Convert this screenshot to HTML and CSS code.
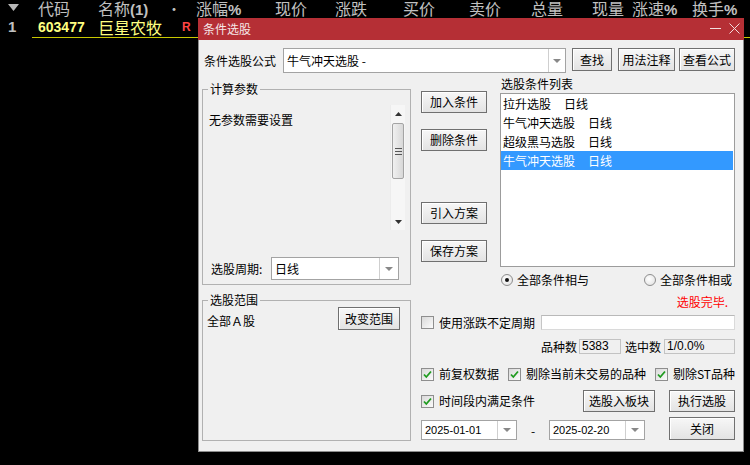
FILE: index.html
```html
<!DOCTYPE html>
<html lang="zh-CN">
<head>
  <meta charset="UTF-8" />
  <title>条件选股</title>
  <link rel="stylesheet" href="styles.css">
</head>
<body>
  <div class="quote-head">
    <span class="mark"><svg width="11" height="7" viewBox="0 0 11 7"><path d="M0 0 H11 L5.5 7 Z" fill="#b8b8b8"/></svg></span>
    <span class="c-code">代码</span>
    <span>名称<b>(1)</b></span>
    <span class="dot">•</span>
    <span>涨幅<b>%</b></span>
    <span>现价</span>
    <span>涨跌</span>
    <span>买价</span>
    <span>卖价</span>
    <span>总量</span>
    <span>现量</span>
    <span>涨速<b>%</b></span>
    <span>换手<b>%</b></span>
  </div>
  <div class="quote-row">
    <span class="idx">1</span>
    <span class="c-code code">603477</span>
    <span class="name">巨星农牧</span>
    <span class="flag">R</span>
    <span></span><span></span><span></span><span></span><span></span>
    <span></span><span></span><span></span><span></span>
  </div>

  <div class="dlg">
    <div class="dlg-title">
      <span>条件选股</span>
      <svg width="40" height="22" viewBox="0 0 40 22">
        <path d="M6 10.5 H17" stroke="#f2dede" stroke-width="1"/>
        <path d="M25.5 5.5 L35.5 15.5 M35.5 5.5 L25.5 15.5" stroke="#f2dede" stroke-width="1"/>
      </svg>
    </div>
    <div class="dlg-body">
      <div class="formula-row">
        <span class="formula-lbl">条件选股公式</span>
        <div class="combo combo-formula">
          <span class="combo-text">牛气冲天选股 -</span>
          <span class="combo-btn"><i class="tri"></i></span>
        </div>
        <button class="btn btn-find">查找</button>
        <button class="btn btn-usage">用法注释</button>
        <button class="btn btn-view">查看公式</button>
      </div>

      <div class="main">
        <div class="left-col">
          <fieldset class="group group-params">
            <legend>计算参数</legend>
            <div class="param-pane">
              <div class="param-text">无参数需要设置</div>
              <div class="vscroll">
                <span class="sb-arrow"><svg width="7" height="4" viewBox="0 0 7 4"><path d="M0 4 L3.5 0 L7 4 Z" fill="#333"/></svg></span>
                <span class="sb-thumb"><i></i><i></i><i></i></span>
                <span class="sb-track"></span>
                <span class="sb-arrow"><svg width="7" height="4" viewBox="0 0 7 4"><path d="M0 0 L3.5 4 L7 0 Z" fill="#333"/></svg></span>
              </div>
            </div>
            <div class="period-row">
              <span class="period-lbl">选股周期:</span>
              <div class="combo combo-period">
                <span class="combo-text">日线</span>
                <span class="combo-btn"><i class="tri"></i></span>
              </div>
            </div>
          </fieldset>

          <fieldset class="group group-range">
            <legend>选股范围</legend>
            <div class="range-row">
              <span class="range-text">全部Ａ股</span>
              <button class="btn btn-range">改变范围</button>
            </div>
          </fieldset>
        </div>

        <div class="right-col">
          <div class="top-area">
            <div class="mid-btns">
              <button class="btn">加入条件</button>
              <button class="btn">删除条件</button>
              <button class="btn gap-big">引入方案</button>
              <button class="btn">保存方案</button>
            </div>
            <div class="list-col">
              <div class="list-lbl">选股条件列表</div>
              <div class="cond-list">
                <div class="cond-item">拉升选股<span class="period">日线</span></div>
                <div class="cond-item">牛气冲天选股<span class="period">日线</span></div>
                <div class="cond-item">超级黑马选股<span class="period">日线</span></div>
                <div class="cond-item selected">牛气冲天选股<span class="period">日线</span></div>
              </div>
              <div class="radio-row">
                <label class="opt"><span class="radio on"></span>全部条件相与</label>
                <label class="opt"><span class="radio"></span>全部条件相或</label>
              </div>
            </div>
          </div>

          <div class="status">选股完毕.</div>

          <div class="row row-cycle">
            <label class="opt"><span class="chk"></span>使用涨跌不定周期</label>
            <span class="edit edit-cycle"></span>
          </div>

          <div class="row row-count">
            <span>品种数</span>
            <span class="field field-total">5383</span>
            <span class="count-lbl">选中数</span>
            <span class="field field-hit">1/0.0%</span>
          </div>

          <div class="row row-opts">
            <label class="opt"><span class="chk on"><svg width="11" height="11" viewBox="0 0 11 11"><path d="M2 5.5 L4.3 8 L9 2.5" fill="none" stroke="#1f9b1f" stroke-width="1.8"/></svg></span>前复权数据</label>
            <label class="opt"><span class="chk on"><svg width="11" height="11" viewBox="0 0 11 11"><path d="M2 5.5 L4.3 8 L9 2.5" fill="none" stroke="#1f9b1f" stroke-width="1.8"/></svg></span>剔除当前未交易的品种</label>
            <label class="opt"><span class="chk on"><svg width="11" height="11" viewBox="0 0 11 11"><path d="M2 5.5 L4.3 8 L9 2.5" fill="none" stroke="#1f9b1f" stroke-width="1.8"/></svg></span>剔除ST品种</label>
          </div>

          <div class="row row-run">
            <label class="opt"><span class="chk on"><svg width="11" height="11" viewBox="0 0 11 11"><path d="M2 5.5 L4.3 8 L9 2.5" fill="none" stroke="#1f9b1f" stroke-width="1.8"/></svg></span>时间段内满足条件</label>
            <button class="btn btn-block">选股入板块</button>
            <button class="btn btn-run">执行选股</button>
          </div>

          <div class="row row-dates">
            <div class="combo combo-date">
              <span class="combo-text date">2025-01-01</span>
              <span class="combo-btn"><i class="tri"></i></span>
            </div>
            <span class="dash">-</span>
            <div class="combo combo-date">
              <span class="combo-text date">2025-02-20</span>
              <span class="combo-btn"><i class="tri"></i></span>
            </div>
            <button class="btn btn-close">关闭</button>
          </div>
        </div>
      </div>
    </div>
  </div>
</body>
</html>
```

FILE: styles.css
```css
* {
  box-sizing: border-box;
}
body {
  margin: 0;
  width: 750px;
  height: 465px;
  overflow: hidden;
  position: relative;
  background: #000;
  font-family: "Noto Sans CJK SC", sans-serif;
  font-size: 12px;
  color: #000;
}

/* quote table behind the dialog */
.quote-head,
.quote-row {
  display: grid;
  grid-template-columns: 32px 66px 68px 30px 79px 60px 68px 66px 62px 61px 40px 60px 1fr;
  color: #c0c0c0;
  white-space: nowrap;
}
.quote-head {
  height: 17px;
  font-size: 16px;
  line-height: 16px;
}
.quote-head b {
  font-family: "Liberation Sans", sans-serif;
  font-size: 15px;
}
.quote-head .mark {
  padding: 4px 0 0 8px;
  line-height: 0;
}
.quote-head .dot {
  padding-left: 1px;
  font-size: 14px;
}
.c-code {
  padding-left: 6px;
}
.quote-row {
  height: 21px;
  line-height: 20px;
}
.quote-row > span:not(:first-child) {
  border-bottom: 1px solid #c8c800;
}
.quote-row .idx {
  padding-left: 8px;
  font-family: "Liberation Sans", sans-serif;
  font-weight: bold;
  font-size: 15px;
}
.quote-row .code {
  color: #ffff80;
  font-family: "Liberation Sans", sans-serif;
  font-weight: bold;
  font-size: 14px;
}
.quote-row .name {
  color: #ffff80;
  font-size: 16px;
}
.quote-row .flag {
  padding-left: 16px;
  color: #ff4444;
  font-family: "Liberation Sans", sans-serif;
  font-weight: bold;
  font-size: 12px;
}

/* dialog window */
.dlg {
  position: absolute;
  left: 198px;
  top: 18px;
  width: 546px;
  height: 434px;
  background: #f0f0f0;
  border: 1px solid #8c8c8c;
  border-top: 0;
  display: flex;
  flex-direction: column;
}
.dlg-title {
  height: 22px;
  margin: 0 -1px;
  padding-left: 5px;
  background: #b52f35;
  color: #f6e8e8;
  display: flex;
  align-items: center;
  justify-content: space-between;
  line-height: 22px;
}
.dlg-title svg {
  display: block;
}
.dlg-body {
  flex: 1;
  padding: 8px 8px 0 3px;
}

button {
  font: inherit;
  color: #000;
  padding: 0;
  margin: 0;
}
.btn {
  height: 22px;
  border: 1px solid #707070;
  background: linear-gradient(#f7f7f7, #e3e3e3);
  box-shadow: inset 1px 1px #fff;
  line-height: 18px;
}

.combo {
  display: flex;
  background: #fff;
  border: 1px solid #a3a3a3;
}
.combo-text {
  flex: 1;
  padding-left: 3px;
  white-space: nowrap;
}
.combo-btn {
  width: 17px;
  border-left: 1px solid #cfcfcf;
  display: flex;
  align-items: center;
  justify-content: center;
}
.tri {
  width: 0;
  height: 0;
  border-left: 4px solid transparent;
  border-right: 4px solid transparent;
  border-top: 4px solid #888;
}

/* formula row */
.formula-row {
  display: flex;
  align-items: flex-start;
  height: 25px;
}
.formula-lbl {
  margin-left: 2px;
  width: 72px;
  line-height: 25px;
}
.combo-formula {
  margin-left: 7px;
  width: 283px;
  height: 25px;
  line-height: 23px;
}
.btn-find {
  margin-left: 6px;
  width: 40px;
  height: 23px;
}
.btn-usage {
  margin-left: 6px;
  width: 57px;
  height: 23px;
}
.btn-view {
  margin-left: 4px;
  width: 56px;
  height: 23px;
}

/* main area */
.main {
  display: flex;
  margin-top: 4px;
}
.left-col {
  width: 209px;
  padding-top: 5px;
}
.right-col {
  width: 314px;
  margin-left: 10px;
}

.group {
  margin: 0;
  padding: 0;
  min-width: 0;
  border: 1px solid #b1b1b1;
}
.group legend {
  margin-left: 5px;
  padding: 0 2px;
  line-height: 14px;
}
.group-params {
  height: 203px;
}
.group-range {
  height: 148px;
  margin-top: 8px;
}

.param-pane {
  display: flex;
  width: 200px;
  height: 125px;
  margin: 9px 0 0 2px;
}
.param-text {
  flex: 1;
  padding: 8px 0 0 4px;
  line-height: 14px;
}
.vscroll {
  width: 15px;
  display: flex;
  flex-direction: column;
  background: #f6f6f6;
  border-left: 1px solid #ececec;
}
.sb-arrow {
  height: 17px;
  display: flex;
  align-items: center;
  justify-content: center;
}
.sb-thumb {
  height: 56px;
  margin: 1px 1px 0;
  border: 1px solid #a4a4a4;
  border-radius: 2px;
  background: linear-gradient(to right, #f0f0f0, #d8d8d8);
  display: flex;
  flex-direction: column;
  align-items: center;
  justify-content: center;
  gap: 2px;
}
.sb-thumb i {
  width: 7px;
  height: 1px;
  background: #555;
}
.sb-track {
  flex: 1;
}

.period-row {
  display: flex;
  align-items: center;
  height: 23px;
  margin-top: 27px;
}
.period-lbl {
  margin-left: 8px;
  width: 53px;
}
.combo-period {
  margin-left: 7px;
  width: 128px;
  height: 23px;
  line-height: 21px;
}
.combo-period .combo-btn {
  width: 19px;
}

.range-row {
  display: flex;
  justify-content: space-between;
  align-items: flex-start;
  padding: 0 10px 0 4px;
}
.range-text {
  padding-top: 7px;
  line-height: 14px;
}
.btn-range {
  width: 62px;
  height: 23px;
}

/* right side */
.top-area {
  display: flex;
  height: 211px;
}
.mid-btns {
  width: 66px;
  padding-top: 14px;
  display: flex;
  flex-direction: column;
}
.mid-btns .btn {
  width: 66px;
  margin-bottom: 16px;
}
.mid-btns .gap-big {
  margin-top: 35px;
}
.list-col {
  width: 235px;
  margin-left: 13px;
}
.list-lbl {
  padding-left: 1px;
  line-height: 14px;
}
.cond-list {
  margin-top: 2px;
  height: 174px;
  background: #fff;
  border: 1px solid #9c9c9c;
  padding-right: 1px;
}
.cond-item {
  height: 19px;
  line-height: 19px;
  padding-left: 2px;
  white-space: nowrap;
}
.cond-item .period {
  margin-left: 13px;
}
.cond-item.selected {
  background: #3399ff;
  color: #fff;
}

.opt {
  display: flex;
  align-items: center;
  white-space: nowrap;
  line-height: 14px;
}
.radio-row {
  display: flex;
  justify-content: space-between;
  margin-top: 6px;
  padding: 0 3px 0 1px;
}
.radio {
  width: 12px;
  height: 12px;
  margin-right: 4px;
  border: 1px solid #8e8e8e;
  border-radius: 50%;
  background: radial-gradient(circle at 40% 40%, #fff, #dedede);
  display: flex;
  align-items: center;
  justify-content: center;
}
.radio.on::after {
  content: "";
  width: 4px;
  height: 4px;
  border-radius: 50%;
  background: #111;
}

.chk {
  width: 13px;
  height: 13px;
  margin-right: 5px;
  border: 1px solid #8e8e8e;
  background: linear-gradient(135deg, #d9d9d9, #fbfbfb);
  line-height: 0;
}

.status {
  margin-top: 7px;
  padding-right: 7px;
  text-align: right;
  line-height: 14px;
  color: #ff0000;
}
.row {
  display: flex;
  align-items: center;
}
.row-cycle {
  margin-top: 6px;
  height: 15px;
}
.edit {
  display: block;
  height: 15px;
  background: #fff;
  border: 1px solid #dadada;
  border-top-color: #b9b9b9;
  border-left-color: #c6c6c6;
}
.edit-cycle {
  margin-left: auto;
  width: 194px;
}
.row-count {
  margin-top: 9px;
  height: 15px;
  justify-content: flex-end;
}
.field {
  height: 15px;
  padding-left: 2px;
  line-height: 13px;
  border: 1px solid #c3c3c3;
  font-family: "Liberation Sans", sans-serif;
  font-size: 12px;
}
.field-total {
  width: 42px;
  margin-left: 2px;
}
.count-lbl {
  margin: 0 3px 0 4px;
}
.field-hit {
  width: 71px;
}
.row-opts {
  margin-top: 13px;
  height: 14px;
  justify-content: space-between;
}
.row-run {
  margin-top: 9px;
  height: 22px;
}
.btn-block {
  margin-left: auto;
  width: 72px;
}
.btn-run {
  margin-left: 14px;
  width: 66px;
}
.row-dates {
  margin-top: 5px;
  height: 23px;
  align-items: flex-end;
}
.combo-date {
  width: 96px;
  height: 20px;
  line-height: 18px;
}
.combo-date .combo-btn {
  width: 19px;
}
.combo-text.date {
  font-family: "Liberation Sans", sans-serif;
  font-size: 11px;
  padding-left: 3px;
}
.dash {
  width: 32px;
  text-align: center;
  line-height: 18px;
}
.btn-close {
  margin-left: auto;
  width: 66px;
  height: 23px;
}
```
